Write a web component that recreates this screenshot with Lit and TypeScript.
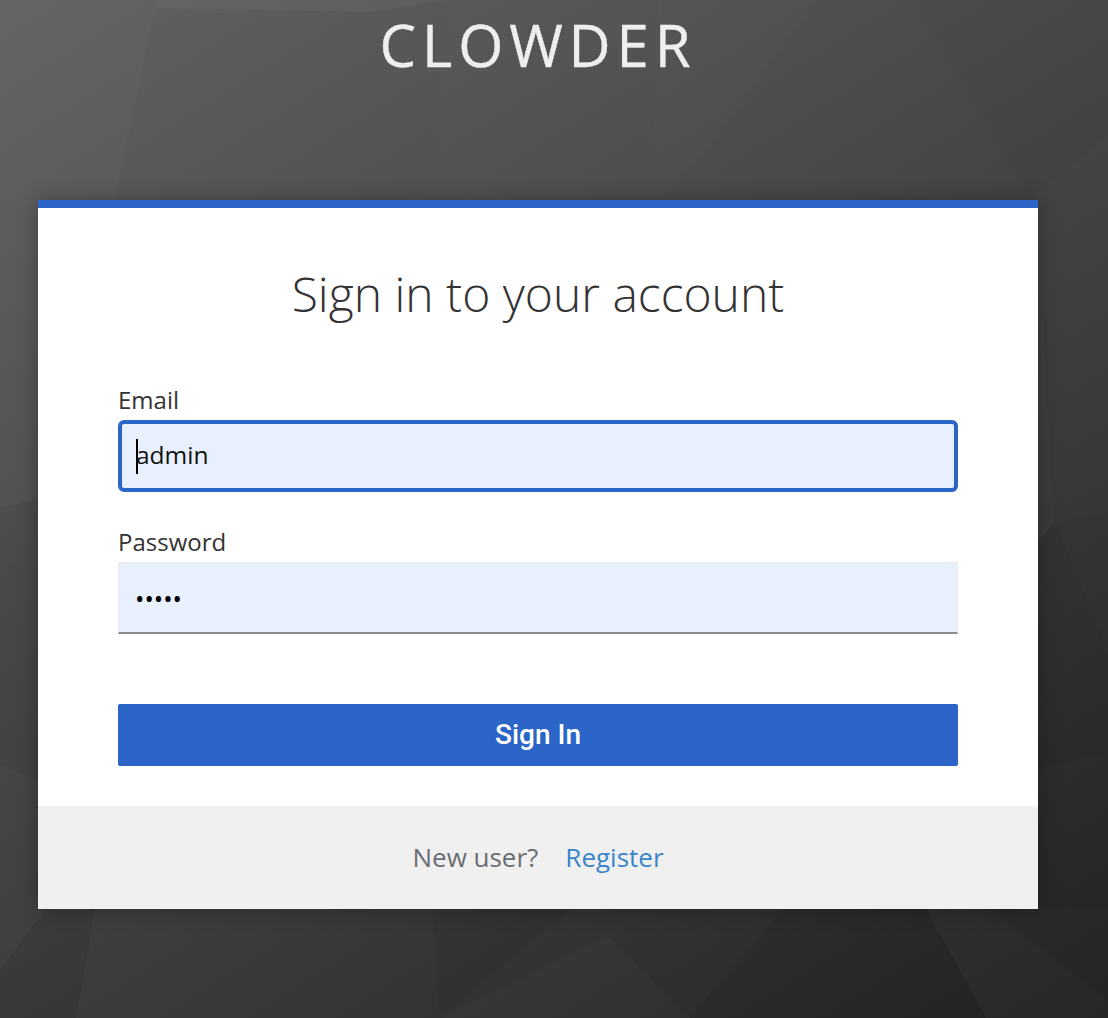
import { LitElement, html, css, svg } from "lit";
import { customElement } from "lit/decorators.js";

const FACETS: [string, string, number][] = [
  ["0,0 155,0 155,8 115,200 70,498 38,498 0,508", "#fff", 0.02],
  ["155,8 370,12 447,0 155,0", "#fff", 0.04],
  ["447,0 657,0 650,200 432,200", "#fff", 0.008],
  ["657,0 817,0 700,160 650,200", "#fff", 0.012],
  ["913,0 1108,0 1108,135 1030,200", "#000", 0.02],
  ["1056,523 1108,512 1108,652", "#000", 0.03],
  ["1038,540 1056,523 1108,652 1108,752 1038,770", "#000", 0.07],
  ["1038,770 1108,752 1108,909 1038,909", "#000", 0.03],
  ["1041,290 1054,523 1038,540", "#fff", 0.02],
  ["0,508 38,498 38,535 0,575", "#000", 0.03],
  ["0,575 38,535 38,780 0,765", "#000", 0.05],
  ["46,909 95,909 76,1018 0,1018 0,970", "#000", 0.08],
  ["432,909 572,909 440,1018", "#000", 0.04],
  ["608,935 689,1018 440,1018", "#fff", 0.015],
  ["784,909 926,909 986,1018 689,1018", "#000", 0.06],
  ["926,909 989,909 1108,1000 1108,1018 986,1018", "#fff", 0.015],
];

@customElement("app-root")
export class AppRoot extends LitElement {
  static styles = css`
    :host {
      display: block;
      position: relative;
      height: 1018px;
      overflow: hidden;
      font-family: "Open Sans", sans-serif;
      background: linear-gradient(148deg, #626262 0%, #242424 100%);
    }
    .facets {
      position: absolute;
      inset: 0;
      width: 100%;
      height: 100%;
    }
    .page {
      position: relative;
      display: flex;
      flex-direction: column;
      align-items: center;
      padding-right: 32px;
    }
    .brand {
      height: 200px;
      box-sizing: border-box;
      padding-top: 5px;
      margin: 0;
      color: #eeeeee;
      font-size: 58px;
      line-height: 80px;
      font-weight: 400;
      letter-spacing: 5.9px;
      -webkit-text-stroke: 0.4px #eeeeee;
    }
    .card {
      width: 1000px;
      background: #fff;
      border-top: 8px solid #2a65c7;
      box-shadow: 0 0 20px rgba(0, 0, 0, 0.3);
    }
    .body {
      padding: 53px 80px 40px;
    }
    h1 {
      margin: 0 0 61px;
      text-align: center;
      font-size: 48px;
      line-height: 66px;
      font-weight: 300;
      color: #333;
    }
    label {
      display: block;
      height: 32px;
      font-size: 24px;
      line-height: 24px;
      color: #333;
    }
    .field {
      position: relative;
      box-sizing: border-box;
      height: 72px;
      margin-bottom: 38px;
      display: flex;
      align-items: center;
      background: #e8f0fd;
      color: #111;
      font-size: 24.5px;
    }
    .pw {
      border-top: 1px solid #ececec;
      border-left: 1px solid #ececec;
      border-right: 1px solid #ececec;
      border-bottom: 2px solid #8b8d90;
      margin-bottom: 70px;
      padding: 0 16px;
      color: #000;
      font-size: 25px;
    }
    .focus {
      border: 4px solid #2a65c7;
      border-radius: 6px;
      padding: 0 14px 3px;
    }
    .caret {
      position: absolute;
      left: 14px;
      top: 15px;
      width: 2px;
      height: 35px;
      background: #000;
    }
    .btn {
      display: block;
      width: 100%;
      height: 62px;
      border: 0;
      border-radius: 2px;
      padding: 0 0 2px;
      background: #2a65c7;
      color: #fff;
      font-family: "Roboto", sans-serif;
      font-size: 28px;
      font-weight: 500;
    }
    .foot {
      box-sizing: border-box;
      height: 103px;
      padding-bottom: 2px;
      display: flex;
      justify-content: center;
      align-items: center;
      gap: 27px;
      background: #f0f0f0;
      font-size: 26px;
      color: #6a6e73;
    }
    a {
      color: #3a85c9;
      text-decoration: none;
    }
  `;

  render() {
    return html`
      <svg class="facets" viewBox="0 0 1108 1018" preserveAspectRatio="none" aria-hidden="true">
        ${FACETS.map(([p, f, o]) => svg`<polygon points=${p} fill=${f} fill-opacity=${o}></polygon>`)}
      </svg>
      <div class="page">
        <h2 class="brand">CLOWDER</h2>
        <main class="card">
          <div class="body">
            <h1>Sign in to your account</h1>
            <label>Email</label>
            <div class="field focus" role="textbox"><span class="caret"></span>admin</div>
            <label>Password</label>
            <div class="field pw" role="textbox">•••••</div>
            <button class="btn">Sign In</button>
          </div>
          <div class="foot"><span>New user?</span><a href="#">Register</a></div>
        </main>
      </div>
    `;
  }
}
